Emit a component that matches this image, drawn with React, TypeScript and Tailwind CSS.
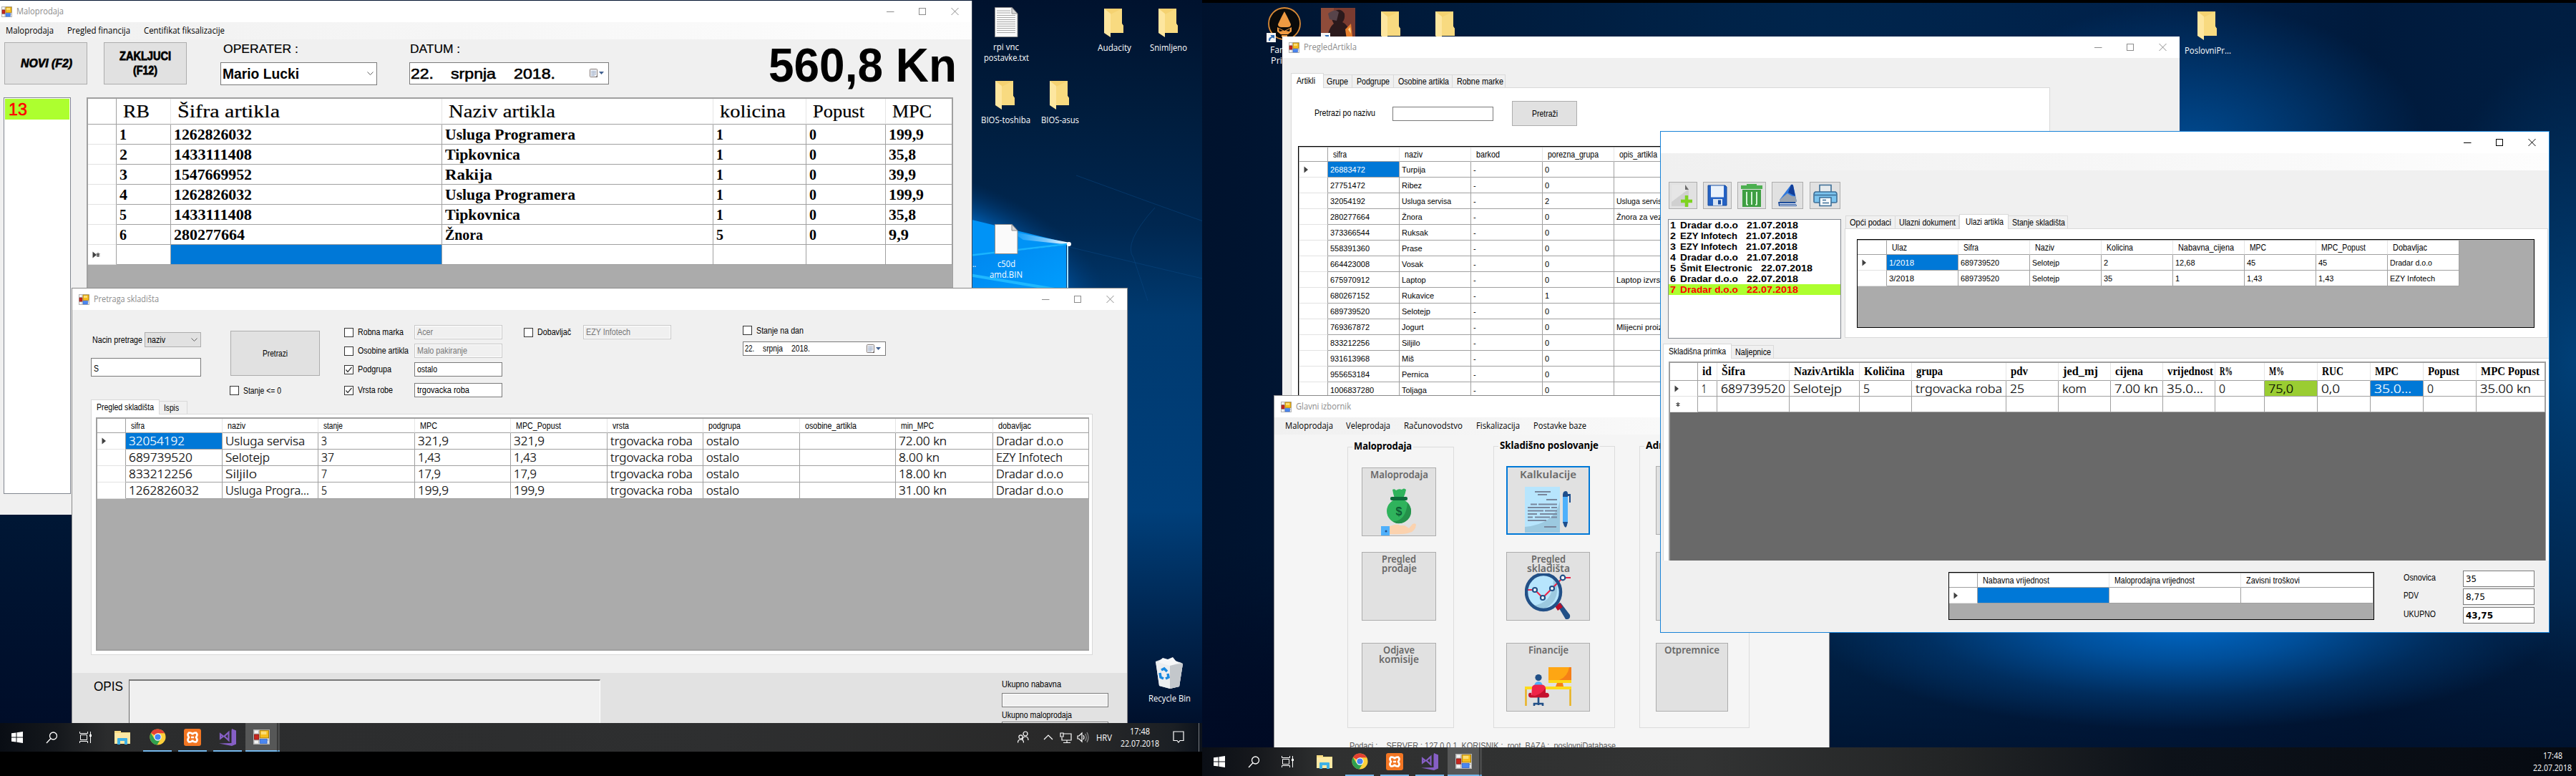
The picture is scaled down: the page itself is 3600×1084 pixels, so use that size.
import React, { useLayoutEffect, useRef } from "react";

const SANS = "font-['Liberation_Sans',Arial,sans-serif]";
const UI = "font-['Open_Sans',sans-serif]";
const SERIF = "font-['Liberation_Serif',serif]";
const NOTO = "font-['Noto_Sans',sans-serif]";

/* Single line of text squeezed or stretched horizontally to a given width. */
function Fit({ w, children, className = "" }: { w?: number; children: React.ReactNode; className?: string }) {
  const ref = useRef<HTMLSpanElement>(null);
  useLayoutEffect(() => {
    const el = ref.current;
    if (!el || !w) return;
    el.style.transform = "none";
    const natural = el.getBoundingClientRect().width;
    if (natural > 0) el.style.transform = `scaleX(${w / natural})`;
  });
  return (
    <span className={`block shrink-0 ${className}`} style={w ? { width: w } : undefined}>
      <span ref={ref} className="inline-block origin-left whitespace-pre">
        {children}
      </span>
    </span>
  );
}

/* "text|width" shorthand */
function Txt({ v, className = "" }: { v: string; className?: string }) {
  const [t, w] = v.split("|");
  return (
    <Fit w={w ? Number(w) : undefined} className={className}>
      {t}
    </Fit>
  );
}

function FormIcon({ className = "h-[15px] w-[15px]" }: { className?: string }) {
  return (
    <svg viewBox="0 0 15 15" className={`shrink-0 ${className}`} preserveAspectRatio="none">
      <rect x="0.5" y="0.5" width="14" height="14" fill="#f4f4f4" stroke="#b4b4b4" />
      <path d="M5 1v13M1 4.5h4M1 10.500h13" stroke="#b8b8b8" strokeWidth="1" />
      <rect x="1" y="5" width="4" height="5" fill="#c8261e" stroke="#8e1a14" strokeWidth="0.6" />
      <rect x="6" y="1" width="8" height="7.500" fill="#f6bd1d" stroke="#a87a08" strokeWidth="0.7" />
      <rect x="7" y="2" width="5" height="3" fill="#fbdc74" />
      <rect x="6" y="9.500" width="6.500" height="4.500" fill="#4a86f0" stroke="#2d5fc0" strokeWidth="0.5" />
    </svg>
  );
}

function TitleBar({ title, dark = false }: { title?: string; dark?: boolean }) {
  const c = dark ? "#000000" : "#8c8c8c";
  return (
    <div className="flex h-[30px] shrink-0 items-center bg-white">
      {title && <FormIcon />}
      {title && <Txt v={title} className={`${UI} ml-[6px] text-[12.5px] leading-[20px] text-[#8c8c8c]`} />}
      <svg width="101" height="12" viewBox="0 0 101 12" className="mr-[18px] ml-auto">
        <path d="M0 6.500H10.500" stroke={c} />
        <rect x="45.500" y="1.500" width="9" height="9" fill="none" stroke={c} />
        <path d="M90.500 1L100.500 11M100.500 1L90.500 11" stroke={c} fill="none" />
      </svg>
    </div>
  );
}

type GridProps = {
  widths: number[];
  heads: string[];
  rows: string[][];
  headClass: string;
  cellClass: string;
  headPad: string;
  cellPad: string;
  headH: string;
  rowH: string;
  selected?: [number, number];
  green?: [number, number];
  marks?: string[];
  className: string;
};

function Marker({ kind }: { kind?: string }) {
  if (!kind) return null;
  return (
    <svg width="14" height="10" viewBox="0 0 14 10" className="ml-[6px]">
      {kind.includes(">") && <path d="M0.500 0.500L6 5L0.500 9.500Z" fill="#404040" />}
      {kind.includes("*") && (
        <path
          transform={kind.includes(">") ? "translate(4 0)" : "translate(1 0)"}
          d="M4 2V8M1.500 3.500L6.500 6.500M6.500 3.500L1.500 6.500"
          stroke="#404040"
          strokeWidth="1.300"
        />
      )}
    </svg>
  );
}

function DataGrid(p: GridProps) {
  return (
    <div className={`shrink-0 overflow-hidden ${p.className}`}>
      <div className={`flex ${p.headH}`}>
        {p.widths.map((w, i) => (
          <div
            key={i}
            className={`flex shrink-0 items-center overflow-hidden border-r border-b border-b-[#a0a0a0] bg-white ${
              i === 0 || i === p.widths.length - 1 ? "border-r-[#a0a0a0]" : "border-r-[#e5e5e5]"
            } ${i ? p.headPad : ""}`}
            style={{ width: w }}
          >
            {i > 0 && p.heads[i - 1] && <Txt v={p.heads[i - 1]} className={p.headClass} />}
          </div>
        ))}
      </div>
      {p.rows.map((r, ri) => (
        <div key={ri} className={`flex ${p.rowH}`}>
          {p.widths.map((w, i) => {
            const sel = p.selected && p.selected[0] === ri && p.selected[1] === i - 1;
            const grn = p.green && p.green[0] === ri && p.green[1] === i - 1;
            return (
              <div
                key={i}
                className={`flex shrink-0 items-center overflow-hidden border-r border-b border-r-[#a0a0a0] ${
                  i === 0 ? "border-b-[#e2e2e2]" : `border-b-[#a0a0a0] ${p.cellPad}`
                } ${sel ? "bg-[#0078d7] text-white" : grn ? "bg-[#9acd32] text-black" : "bg-white text-black"}`}
                style={{ width: w }}
              >
                {i === 0 ? <Marker kind={p.marks?.[ri]} /> : r[i - 1] ? <Txt v={r[i - 1]} className={p.cellClass} /> : null}
              </div>
            );
          })}
        </div>
      ))}
    </div>
  );
}

function Check({ on = false }: { on?: boolean }) {
  return (
    <svg width="13" height="13" viewBox="0 0 13 13" className="shrink-0">
      <rect x="0.500" y="0.500" width="12" height="12" fill="#fff" stroke="#333" />
      {on && <path d="M2.500 6.500L5 9.500L10.500 3" fill="none" stroke="#333" strokeWidth="1.200" />}
    </svg>
  );
}

function CalendarDrop() {
  return (
    <svg width="21" height="13" viewBox="0 0 21 13" className="shrink-0">
      <rect x="0.500" y="0.500" width="10" height="11" rx="0.800" fill="#f3f5f9" stroke="#857b78" />
      <path d="M2 3.500H9M2 5.500H9M2 7.500H9M2 9.500H7M3.500 2.500V10M5.500 2.500V10M7.500 2.500V9" stroke="#a9b7cd" strokeWidth="0.800" />
      <path d="M8 12L11 9V12Z" fill="#6b6462" />
      <path d="M13 4H20L16.500 8Z" fill="#3f5f8f" />
    </svg>
  );
}

function Chevron() {
  return (
    <svg width="9" height="6" viewBox="0 0 9 6">
      <path d="M0.500 0.500L4.500 4.500L8.500 0.500" fill="none" stroke="#606060" />
    </svg>
  );
}

function Tabs({ items, className = "" }: { items: { t: string; w: number; active?: boolean; pad: number }[]; className?: string }) {
  return (
    <div className={`flex h-[20px] shrink-0 items-end ${className}`}>
      {items.map((it) => (
        <div
          key={it.t}
          className={`flex shrink-0 items-center border border-b-0 border-[#d9d9d9] ${
            it.active ? "z-10 -mb-px h-[21px] bg-white pb-px" : "-ml-px h-[18px] bg-[#f0f0f0] pt-px"
          }`}
          style={{ width: it.w, paddingLeft: it.pad }}
        >
          <Txt v={it.t} className={`${SANS} text-[12px] leading-[14px]`} />
        </div>
      ))}
    </div>
  );
}

function Box({ v, className = "", kind = "on" }: { v?: string; className?: string; kind?: "on" | "off" | "readonly" }) {
  const look =
    kind === "off"
      ? "border-[#c8c8c8] bg-[#f0f0f0] text-[#777] shadow-[inset_0_0_0_1px_white]"
      : kind === "readonly"
        ? "border-[#7a7a7a] bg-[#f0f0f0] shadow-[inset_0_0_0_1px_white]"
        : "border-[#7a7a7a] bg-white";
  return (
    <div className={`${SANS} flex items-center overflow-hidden border pl-[3px] text-[12px] leading-[14px] ${look} ${className}`}>
      {v && <Txt v={v} />}
    </div>
  );
}

function CheckRow({ on, label, box, off, className = "" }: { on?: boolean; label: string; box?: string; off?: boolean; className?: string }) {
  return (
    <div className={`flex items-center ${className}`}>
      <Check on={on} />
      <Txt v={label} className={`${SANS} ml-[6px] text-[12px] leading-[14px]`} />
      {box && <Box v={box} kind={off ? "off" : "on"} className="ml-auto h-[20px] w-[123px]" />}
    </div>
  );
}

/* ---------- Maloprodaja ---------- */

const UP = "Usluga Programera|182";
const receipt = [
  ["1|10", "1262826032|109", UP, "1|10", "0|10", "199,9|49"],
  ["2|11", "1433111408|109", "Tipkovnica|105", "1|10", "0|10", "35,8|38"],
  ["3|11", "1547669952|109", "Rakija|66", "1|10", "0|10", "39,9|38"],
  ["4|11", "1262826032|109", UP, "1|10", "0|10", "199,9|49"],
  ["5|10", "1433111408|109", "Tipkovnica|105", "1|10", "0|10", "35,8|38"],
  ["6|10", "280277664|99", "Žnora|53", "5|10", "0|10", "9,9|28"],
  ["", "", "", "", "", ""],
];

function Maloprodaja() {
  return (
    <div className="absolute top-px left-0 flex h-[718px] w-[1359px] flex-col overflow-hidden border-r border-[#3a4658] bg-[#f0f0f0] pl-[2px]">
      <div className="-ml-[2px] bg-white pl-[2px]">
        <TitleBar title="Maloprodaja|66" />
      </div>
      <div className={`${UI} -ml-[2px] flex h-[24px] shrink-0 items-center bg-linear-to-r from-[#f0f0f0] to-[#fdfdfd] text-[12.5px] leading-[16px]`}>
        <Txt v="Maloprodaja|67" className="ml-[8px]" />
        <Txt v="Pregled financija|88" className="ml-[19px]" />
        <Txt v="Centifikat fiksalizacije|113" className="ml-[19px]" />
      </div>
      <div className="flex h-[81px] shrink-0 items-start pt-[4px] pl-[4px]">
        <div className="flex h-[59px] w-[116px] items-center border border-[#adadad] bg-[#e1e1e1]">
          <Txt v="NOVI (F2)|72" className={`${SANS} ml-[22px] text-[17px] font-black italic [-webkit-text-stroke:0.7px_black]`} />
        </div>
        <div className={`${SANS} ml-[23px] flex h-[59px] w-[116px] flex-col items-center justify-center border border-[#adadad] bg-[#e1e1e1] text-[17px] leading-[20px] font-black [-webkit-text-stroke:0.8px_black]`}>
          <Txt v="ZAKLJUCI|72" />
          <Txt v="(F12)|34" />
        </div>
        <div className="ml-[47px] w-[219px]">
          <Txt v="OPERATER :|105" className={`${SANS} ml-[4px] text-[17px] leading-[20px] [-webkit-text-stroke:0.2px_black]`} />
          <div className="mt-[8px] flex h-[32px] items-center border border-[#7a7a7a] bg-white pr-[4px] pl-[2px]">
            <Txt v="Mario Lucki|107" className={`${SANS} text-[20px] leading-[24px] font-bold`} />
            <div className="ml-auto">
              <Chevron />
            </div>
          </div>
        </div>
        <div className="ml-[45px] w-[279px]">
          <Txt v="DATUM :|70" className={`${SANS} ml-px text-[17px] leading-[20px] [-webkit-text-stroke:0.2px_black]`} />
          <div className={`${SANS} mt-[8px] flex h-[31px] items-center border border-[#7a7a7a] bg-white pr-[5px] text-[20px] leading-[24px] [-webkit-text-stroke:0.6px_black]`}>
            <Txt v="22.|32" className="ml-px" />
            <Txt v="srpnja|63" className="ml-[24px]" />
            <Txt v="2018.|58" className="ml-[25px]" />
            <div className="ml-auto">
              <CalendarDrop />
            </div>
          </div>
        </div>
        <Txt v="560,8 Kn|263" className={`${SANS} mr-[21px] ml-auto text-[66px] leading-[64px] font-bold`} />
      </div>
      <div className="flex items-start pl-[3px]">
        <div className="h-[554px] w-[94px] shrink-0 border border-[#828790] bg-white p-px">
          <div className="flex h-[29px] items-center bg-[#adff2f] pl-[5px]">
            <Txt v="13|26" className={`${SANS} text-[24px] leading-[26px] text-[#ff0000] [-webkit-text-stroke:0.6px_#ff0000]`} />
          </div>
        </div>
        <DataGrid
          className="ml-[22px] h-[500px] w-[1211px] border-2 border-r border-[#a0a0a0] bg-[#ababab]"
          widths={[40, 76, 379, 379, 130, 111, 93]}
          heads={["RB|37", "Šifra artikla|143", "Naziv artikla|149", "kolicina|92", "Popust|72", "MPC|55"]}
          rows={receipt}
          marks={["", "", "", "", "", "", ">*"]}
          selected={[6, 1]}
          headH="h-[36px]"
          rowH="h-[28px]"
          headPad="pl-[9px]"
          cellPad="pl-[4px]"
          headClass={`${SERIF} text-[25px] leading-[30px] [-webkit-text-stroke:0.2px_black]`}
          cellClass={`${SERIF} text-[20.5px] leading-[24px] font-bold`}
        />
      </div>
    </div>
  );
}

/* ---------- Pretraga skladišta ---------- */

const stock = [
  ["32054192|78", "Usluga servisa|111", "3|8", "321,9|43", "321,9|43", "trgovacka roba|115", "ostalo|46", "", "72.00 kn|67", "Dradar d.o.o|94"],
  ["689739520|89", "Selotejp|62", "37|18", "1,43|32", "1,43|32", "trgovacka roba|115", "ostalo|46", "", "8.00 kn|57", "EZY Infotech|93"],
  ["833212256|89", "Siljilo|44", "7|8", "17,9|32", "17,9|32", "trgovacka roba|115", "ostalo|46", "", "18.00 kn|67", "Dradar d.o.o|94"],
  ["1262826032|98", "Usluga Progra...|117", "5|8", "199,9|43", "199,9|43", "trgovacka roba|115", "ostalo|46", "", "31.00 kn|67", "Dradar d.o.o|94"],
];

function PretragaSkladista() {
  return (
    <div className={`${SANS} absolute top-[402px] left-[100px] flex h-[640px] w-[1476px] flex-col overflow-hidden border border-[#8a8a8a] bg-[#f0f0f0] text-[12px] leading-[14px]`}>
      <div className="bg-white pl-[9px]">
        <TitleBar title="Pretraga skladišta|91" />
      </div>
      <div className="flex h-[125px] shrink-0 items-start">
        <div className="ml-[26px] w-[154px] pt-[31px]">
          <div className="flex h-[21px] items-center">
            <Txt v="Nacin pretrage|70" className="ml-[2px]" />
            <div className="ml-auto flex h-[21px] w-[79px] items-center border border-[#adadad] bg-[#e1e1e1] pr-[4px] pl-[3px]">
              <Txt v="naziv|25" />
              <div className="ml-auto">
                <Chevron />
              </div>
            </div>
          </div>
          <Box v="S|7" className="mt-[15px] h-[26px] pt-[3px]" />
        </div>
        <div className="ml-[41px] w-[125px] pt-[29px]">
          <div className="flex h-[63px] items-center justify-center border border-[#adadad] bg-[#e1e1e1]">
            <Txt v="Pretrazi|35" />
          </div>
          <CheckRow label="Stanje <= 0|53" className="mt-[14px] -ml-px h-[13px]" />
        </div>
        <div className="ml-[34px] w-[221px] pt-[21px]">
          <CheckRow label="Robna marka|64" box="Acer|22" off className="h-[20px]" />
          <CheckRow label="Osobine artikla|71" box="Malo pakiranje|70" off className="mt-[6px] h-[20px]" />
          <CheckRow on label="Podgrupa|47" box="ostalo|28" className="mt-[6px] h-[20px]" />
          <CheckRow on label="Vrsta robe|49" box="trgovacka roba|73" className="mt-[9px] h-[20px]" />
        </div>
        <div className="ml-[30px] w-[206px] pt-[21px]">
          <CheckRow label="Dobavljač|47" box="EZY Infotech|62" off className="h-[20px]" />
        </div>
        <div className="ml-[100px] w-[200px] pt-[22px]">
          <CheckRow label="Stanje na dan|66" className="h-[13px]" />
          <div className="mt-[9px] flex h-[20px] items-center border border-[#7a7a7a] bg-white pr-[5px] pl-[2px]">
            <Txt v="22.|13" />
            <Txt v="srpnja|28" className="ml-[12px]" />
            <Txt v="2018.|26" className="ml-[12px]" />
            <div className="ml-auto">
              <CalendarDrop />
            </div>
          </div>
        </div>
      </div>
      <Tabs
        className="ml-[26px]"
        items={[
          { t: "Pregled skladišta|80", w: 96, active: true, pad: 7 },
          { t: "Ispis|21", w: 40, pad: 6 },
        ]}
      />
      <div className="ml-[26px] h-[337px] w-[1400px] shrink-0 border border-[#d9d9d9] bg-white pt-[4px] pl-[6px]">
        <DataGrid
          className="h-[326px] w-[1388px] border-2 border-r-0 border-[#a0a0a0] bg-[#ababab]"
          widths={[40, 135, 134, 135, 134, 135, 134, 135, 134, 136, 134]}
          heads={["sifra|19", "naziv|25", "stanje|27", "MPC|24", "MPC_Popust|63", "vrsta|23", "podgrupa|45", "osobine_artikla|72", "min_MPC|46", "dobavljac|46"]}
          rows={stock}
          marks={[">"]}
          selected={[0, 0]}
          headH="h-[20px]"
          rowH="h-[23px]"
          headPad="pl-[7px]"
          cellPad="pl-[4px]"
          headClass={`${SANS} text-[12px] leading-[14px]`}
          cellClass={`${NOTO} text-[17px] leading-[20px] font-light [-webkit-text-stroke:0.2px]`}
        />
      </div>
      <div className="mt-[25px] flex h-[110px] shrink-0 items-start bg-[#e2e2e2]">
        <Txt v="OPIS|41" className="mt-[8px] ml-[30px] text-[18px] leading-[22px]" />
        <div className="mt-[9px] ml-[8px] h-[120px] w-[659px] border-t-2 border-r border-l border-t-[#787878] border-r-white border-l-[#696969] bg-[#f0f0f0]" />
        <div className="ml-[561px] w-[149px] pt-[9px]">
          <Txt v="Ukupno nabavna|83" />
          <Box kind="readonly" className="mt-[5px] h-[20px]" />
          <Txt v="Ukupno maloprodaja|98" className="mt-[4px]" />
          <Box kind="readonly" className="mt-[2px] h-[20px]" />
        </div>
      </div>
    </div>
  );
}

/* ---------- PregledArtikla ---------- */

const articles = (
  [
    ["26883472", "Turpija", "0", ""],
    ["27751472", "Ribez", "0", ""],
    ["32054192", "Usluga servisa|69", "2", "Usluga servisa|69"],
    ["280277664", "Žnora", "0", "Žnora za vezanje"],
    ["373366544", "Ruksak", "0", ""],
    ["558391360", "Prase", "0", ""],
    ["664423008", "Vosak", "0", ""],
    ["675970912", "Laptop", "0", "Laptop izvrsni|70"],
    ["680267152", "Rukavice", "1", ""],
    ["689739520", "Selotejp", "0", ""],
    ["769367872", "Jogurt", "0", "Mlijecni proizvod|82"],
    ["833212256", "Siljilo", "0", ""],
    ["931613968", "Miš", "0", ""],
    ["955653184", "Pernica", "0", ""],
    ["1006837280", "Toljaga", "0", ""],
  ] as string[][]
).map(([a, b, c, d]) => [a, b, "-", c, d]);

function PregledArtikla() {
  return (
    <div className={`${SANS} absolute top-[51px] left-[112px] flex h-[560px] w-[1254px] flex-col overflow-hidden bg-[#f0f0f0] text-[12px] leading-[14px]`}>
      <div className="bg-white pl-[9px]">
        <TitleBar title="PregledArtikla|74" />
      </div>
      <Tabs
        className="mt-[21px] ml-[12px]"
        items={[
          { t: "Artikli|26", w: 46, active: true, pad: 7 },
          { t: "Grupe|30", w: 41, pad: 4 },
          { t: "Podgrupe|46", w: 59, pad: 6 },
          { t: "Osobine artikla|71", w: 83, pad: 6 },
          { t: "Robne marke|65", w: 75, pad: 6 },
        ]}
      />
      <div className="ml-[12px] h-[460px] w-[1061px] border border-[#d9d9d9] bg-white">
        <div className="flex h-[81px] items-start pt-[18px] pl-[32px]">
          <Txt v="Pretrazi po nazivu|85" className="mt-[10px]" />
          <Box className="mt-[8px] ml-[24px] h-[20px] w-[141px]" />
          <div className="ml-[26px] flex h-[35px] w-[91px] items-center justify-center border border-[#adadad] bg-[#e1e1e1]">
            <Txt v="Pretraži|36" />
          </div>
        </div>
        <DataGrid
          className="ml-[9px] h-[370px] w-[1000px] border border-black bg-[#ababab] pt-px pl-px"
          widths={[40, 100, 100, 100, 100, 100]}
          heads={["sifra|19", "naziv|25", "barkod|33", "porezna_grupa|71", "opis_artikla|53"]}
          rows={articles}
          marks={[">"]}
          selected={[0, 0]}
          headH="h-[20px]"
          rowH="h-[22px]"
          headPad="pl-[7px]"
          cellPad="pl-[3px]"
          headClass={`${SANS} text-[12px] leading-[14px]`}
          cellClass={`${SANS} text-[11px] leading-[14px]`}
        />
      </div>
    </div>
  );
}

/* ---------- Glavni izbornik ---------- */

function MoneyBag() {
  return (
    <svg width="52" height="66" viewBox="0 0 52 66" preserveAspectRatio="none">
      <path d="M17 2Q20 0 22 3Q26 0 30 2Q33 -1 36 2Q35 8 32 14H20Q18 8 17 2Z" fill="#2fb35c" />
      <ellipse cx="26" cy="32" rx="17" ry="17" fill="#2fb35c" />
      <path d="M43 32A17 17 0 0 1 17 46.500Q36 46 38 20Q43 26 43 32Z" fill="#24914a" />
      <rect x="14" y="12" width="24" height="5" rx="2" fill="#0d6b3a" />
      <text x="26" y="37.500" textAnchor="middle" fontSize="16" fill="#0d5c34" fontFamily="Liberation Sans" fontWeight="bold">
        $
      </text>
      <rect x="1" y="53" width="12" height="13" fill="#4fb0fb" />
      <path d="M13 53L20 51Q26 50 27 52H34L40 56L45 50Q49 48 50 51Q49 60 41 62Q34 65 13 64Z" fill="#fbd2ae" />
      <circle cx="8" cy="60" r="1.500" fill="#1f4e8c" />
    </svg>
  );
}

function DocPen() {
  return (
    <svg width="65" height="64" viewBox="0 0 65 64" preserveAspectRatio="none">
      <rect width="49" height="64" fill="#b7e5fd" />
      <path d="M49 20Q42 52 0 56V64H49Z" fill="#9cc9e0" />
      <path
        d="M14 7H36M18 11H31M30 18H45M8 24.500H17M19 24.500H45M4 29H35M37 29H45M4 33.500H26M28 33.500H45M4 38H17M21 38H45M4 42.500H11M14 42.500H35M37 42.500H45M4 47H30M27 56H44"
        stroke="#78869c"
        strokeWidth="2"
      />
      <rect x="53" y="10" width="7" height="41" fill="#4fb0fb" />
      <path d="M53 12Q53 6 57 6Q60 6 60 10H64V22H62V13H60V14H53ZM53 49H60L58.500 55L57 57L55 55Z" fill="#1f4e8c" />
    </svg>
  );
}

function Magnifier() {
  return (
    <svg width="65" height="64" viewBox="0 0 65 64" preserveAspectRatio="none">
      <path d="M45 44L50 41L63 58Q64 63 60 64H57Z" fill="#225087" />
      <path d="M42 46L49 41L53 47L46 52Z" fill="#b80f2a" />
      <ellipse cx="26" cy="26" rx="24" ry="25" fill="#b7e5fd" />
      <path d="M44 14Q50 40 24 51Q16 51 10 45Q40 42 40 9Z" fill="#9cc9e0" />
      <path d="M4 23H14L25 34L38 21L53 6H64" fill="none" stroke="#ef2348" strokeWidth="2.200" />
      <ellipse cx="26" cy="26" rx="24" ry="25" fill="none" stroke="#225087" strokeWidth="4.500" />
      <g fill="#fff" stroke="#225087" strokeWidth="2.200">
        <circle cx="14" cy="23" r="3" />
        <circle cx="25" cy="34" r="3" />
        <circle cx="38" cy="21" r="3" />
        <circle cx="53" cy="6" r="3.300" />
      </g>
    </svg>
  );
}

function Desk() {
  return (
    <svg width="65" height="56" viewBox="0 0 65 56" preserveAspectRatio="none">
      <rect x="33" y="1" width="32" height="18" fill="#fea613" />
      <path d="M65 1V19H48Q60 14 62 1Z" fill="#f57f17" />
      <rect x="33" y="19" width="32" height="4" fill="#fdd914" />
      <path d="M45 23H53L54 28H43Z" fill="#f57f17" />
      <rect x="0" y="28" width="65" height="4" fill="#fedb1c" />
      <path d="M1.500 32V55M63.500 32V55" stroke="#e9b11c" strokeWidth="2.400" />
      <circle cx="19" cy="15.500" r="4.600" fill="#225087" />
      <path d="M13 27Q14 21 19 21Q24 21 25 27Z" fill="#4fb0fb" />
      <path d="M10 29Q11 25.500 15 25.500H24Q29 26 29 31V43H9Z" fill="#ef2348" />
      <path d="M5 40Q5 36 9 37V40L14 41Q24 38 29 30V37Q33 36 34 40Q34 43 31 43.500H8Q5 43 5 40Z" fill="#c4102e" />
      <path d="M19 43V54M12 52H26M13 51V55M25 51V55" stroke="#225087" strokeWidth="2.600" />
    </svg>
  );
}

function MenuButton({ lines, children, focus = false, className = "" }: { lines: string[]; children?: React.ReactNode; focus?: boolean; className?: string }) {
  return (
    <div
      className={`${NOTO} flex h-[96px] flex-col items-center bg-[#e1e1e1] text-[13.500px] leading-[13px] font-semibold text-[#696969] ${
        focus ? "border-2 border-[#0078d7] pt-[4px]" : "border border-[#adadad] pt-[3px]"
      } ${className}`}
    >
      {lines.map((l) => (
        <Txt key={l} v={l} />
      ))}
      {children}
    </div>
  );
}

function Group({ title, className = "", children }: { title: string; className?: string; children: React.ReactNode }) {
  return (
    <div className={`shrink-0 border border-[#dcdcdc] ${className}`}>
      <div className={`${NOTO} -mt-[11px] ml-[6px] h-[20px] w-fit bg-[#f5f5f5] px-[2px] text-[14px] leading-[18px] font-bold`}>
        <Txt v={title} />
      </div>
      {children}
    </div>
  );
}

function GlavniIzbornik() {
  return (
    <div className="absolute top-[552px] left-[100px] flex h-[560px] w-[777px] flex-col overflow-hidden border border-[#8a8a8a] bg-[#f5f5f5]">
      <div className="bg-white pl-[9px]">
        <TitleBar title="Glavni izbornik|77" />
      </div>
      <div className={`${UI} flex h-[24px] shrink-0 items-center bg-linear-to-r from-[#f0f0f0] to-[#fdfdfd] text-[12.5px] leading-[16px]`}>
        <Txt v="Maloprodaja|67" className="ml-[15px]" />
        <Txt v="Veleprodaja|62" className="ml-[18px]" />
        <Txt v="Računovodstvo|82" className="ml-[19px]" />
        <Txt v="Fiskalizacija|61" className="ml-[19px]" />
        <Txt v="Postavke baze|74" className="ml-[19px]" />
      </div>
      <div className="flex shrink-0 items-end pt-[16px] pl-[102px]">
        <Group title="Maloprodaja|81" className="h-[393px] w-[149px]">
          <MenuButton lines={["Maloprodaja|81"]} className="mt-[19px] ml-[19px] w-[104px]">
            <div className="mt-[12px]">
              <MoneyBag />
            </div>
          </MenuButton>
          <MenuButton lines={["Pregled|48", "prodaje|49"]} className="mt-[22px] ml-[19px] w-[104px]" />
          <MenuButton lines={["Odjave|44", "komisije|56"]} className="mt-[31px] ml-[19px] w-[104px]" />
        </Group>
        <Group title="Skladišno poslovanje|138" className="ml-[55px] h-[394px] w-[170px]">
          <MenuButton focus lines={["Kalkulacije|79"]} className="mt-[18px] ml-[17px] w-[117px]">
            <div className="mt-[10px]">
              <DocPen />
            </div>
          </MenuButton>
          <MenuButton lines={["Pregled|48", "skladišta|60"]} className="mt-[24px] ml-[17px] w-[117px]">
            <Magnifier />
          </MenuButton>
          <MenuButton lines={["Financije|56"]} className="mt-[31px] ml-[17px] w-[117px]">
            <div className="mt-[16px]">
              <Desk />
            </div>
          </MenuButton>
        </Group>
        <Group title="Administracija|100" className="ml-[34px] h-[394px] w-[154px]">
          <MenuButton lines={[]} className="mt-[18px] ml-[22px] w-[101px]" />
          <MenuButton lines={[]} className="mt-[24px] ml-[22px] w-[101px]" />
          <MenuButton lines={["Otpremnice|77"]} className="mt-[31px] ml-[22px] w-[101px]" />
        </Group>
      </div>
      <Txt
        v="Podaci :    SERVER : 127.0.0.1  KORISNIK :  root  BAZA :  poslovniDatabase|372"
        className={`${SANS} mt-[15px] ml-[105px] text-[13px] leading-[20px] text-[#5c5c5c]`}
      />
    </div>
  );
}

/* ---------- Kalkulacije window ---------- */

function ToolButton({ className, children }: { className: string; children: React.ReactNode }) {
  return <div className={`flex h-[38px] items-center justify-center border border-[#adadad] bg-[#e1e1e1] ${className}`}>{children}</div>;
}

function Toolbar() {
  return (
    <div className="ml-px flex items-center">
      <ToolButton className="w-[40px]">
        <svg width="34" height="34" viewBox="0 0 34 34">
          <path d="M1 2H20L25 8V32H1Z" fill="#d0d0d0" />
          <path d="M1 2H20L25 8L1 26Z" fill="#e6e6e6" />
          <path d="M20 2L25 9H20Z" fill="#6a6a6a" />
          <path d="M22 17V33M14 25H30" stroke="#7ed321" strokeWidth="4.500" />
        </svg>
      </ToolButton>
      <ToolButton className="ml-[8px] w-[40px]">
        <svg width="28" height="30" viewBox="0 0 28 30">
          <path d="M1 1H25L27 3V29H1Z" fill="#2462c4" stroke="#174a9c" />
          <rect x="5" y="1.500" width="18" height="16" fill="#eaf2fb" />
          <rect x="8" y="20" width="13" height="9" fill="#d8e4f2" />
          <rect x="15" y="21.500" width="4" height="6" fill="#1a4ea2" />
        </svg>
      </ToolButton>
      <ToolButton className="ml-[8px] w-[40px]">
        <svg width="32" height="32" viewBox="0 0 32 32">
          <path d="M9 0H23V2H31V7H1V2H9Z" fill="#4caf50" />
          <path d="M3 8H29V32H3Z" fill="#3f9f42" />
          <path d="M9 11V28Q9 29 11 29M16 11V29M23 11V28Q23 29 21 29" stroke="#d7f3d8" strokeWidth="2" fill="none" />
        </svg>
      </ToolButton>
      <ToolButton className="ml-[8px] w-[44px]">
        <svg width="28" height="32" viewBox="0 0 28 32">
          <path d="M3 22L19 1Q21 0 22 2L27 25L3 26Z" fill="#2f78dd" />
          <path d="M19 1Q21 0 22 2L25 17L15 12Z" fill="#123f9a" />
          <path d="M3 22L14 13Q20 18 25 17L27 25L3 26Z" fill="#9aa4b0" />
          <path d="M1 25L25 25L27 31H2Z" fill="#1d4c9a" />
          <path d="M3 27.500H26M3 29.500H26" stroke="#f2f6fb" strokeWidth="1" />
        </svg>
      </ToolButton>
      <ToolButton className="ml-[9px] w-[43px]">
        <svg width="34" height="32" viewBox="0 0 34 32" fill="none" stroke="#3c6e96" strokeWidth="1.600">
          <path d="M9 12V1.500H25V12" fill="#e6ebee" />
          <path d="M3 11H31Q33 12 33 14V25Q33 26 31 26H3Q1 26 1 25V14Q1 12 3 11Z" fill="#7cc4ee" />
          <path d="M2 15.500H32" />
          <path d="M9 19H25V30.500H9Z" fill="#f6fafc" />
          <path d="M13 22.500H18M13 26.500H22" />
        </svg>
      </ToolButton>
    </div>
  );
}

const suppliers: [string, string, string][] = [
  ["1", "Dradar d.o.o|81", "21.07.2018|72"],
  ["2", "EZY Infotech|80", "21.07.2018|72"],
  ["3", "EZY Infotech|80", "21.07.2018|72"],
  ["4", "Dradar d.o.o|81", "21.07.2018|72"],
  ["5", "Šmit Electronic|101", "22.07.2018|72"],
  ["6", "Dradar d.o.o|81", "22.07.2018|72"],
  ["7", "Dradar d.o.o|81", "22.07.2018|72"],
];

function TotalRow({ label, v, bold = false, className = "" }: { label: string; v: string; bold?: boolean; className?: string }) {
  return (
    <div className={`flex h-[23px] items-center ${className}`}>
      <div className="w-[83px] pb-[4px]">
        <Txt v={label} />
      </div>
      <div className={`${bold ? "font-bold" : ""} flex h-[23px] w-[100px] items-center border border-[#7a7a7a] bg-white pl-[3px] font-['DejaVu_Sans',sans-serif] text-[12px]`}>
        <Txt v={v} />
      </div>
    </div>
  );
}

function Kalkulacije() {
  return (
    <div className={`${SANS} absolute top-[183px] left-[640px] flex h-[701px] w-[1243px] flex-col overflow-hidden border border-[#1883d7] bg-[#f0f0f0] text-[12px] leading-[14px]`}>
      <TitleBar dark />
      <div className="h-[24px] shrink-0 bg-linear-to-r from-[#f0f0f0] to-[#fdfdfd]" />
      <div className="flex h-[242px] shrink-0 items-start">
        <div className="ml-[10px] w-[242px] shrink-0 pt-[16px]">
          <Toolbar />
          <div className="mt-[14px] h-[167px] border border-[#828790] bg-white">
            {suppliers.map(([n, name, date], i) => (
              <div key={n} className={`flex h-[15px] items-center text-[13px] leading-[15px] font-bold ${i === 6 ? "bg-[#adff2f] text-[#ff0000]" : "text-black"}`}>
                <Fit w={8} className="ml-[2px]">
                  {n}
                </Fit>
                <Txt v={name} className="ml-[6px]" />
                <Txt v={date} className="ml-[12px]" />
              </div>
            ))}
          </div>
        </div>
        <div className="ml-[5px] pt-[61px]">
          <Tabs
            className="pl-[2px]"
            items={[
              { t: "Opći podaci|58", w: 70, pad: 5 },
              { t: "Ulazni dokument|79", w: 90, pad: 5 },
              { t: "Ulazi artikla|53", w: 69, active: true, pad: 8 },
              { t: "Stanje skladišta|74", w: 84, pad: 5 },
            ]}
          />
          <div className="h-[153px] w-[983px] border border-[#d9d9d9] bg-white pt-[14px] pl-[16px]">
            <DataGrid
              className="h-[124px] w-[947px] border border-black bg-[#ababab] pt-px"
              widths={[41, 100, 100, 100, 100, 100, 100, 100, 100]}
              heads={["Ulaz|21", "Sifra|21", "Naziv|27", "Kolicina|37", "Nabavna_cijena|78", "MPC|23", "MPC_Popust|62", "Dobavljac|48"]}
              rows={[
                ["1/2018|35", "689739520|54", "Selotejp|38", "2", "12,68", "45", "45", "Dradar d.o.o|59"],
                ["3/2018|35", "689739520|54", "Selotejp|38", "35", "1", "1,43", "1,43", "EZY Infotech|63"],
              ]}
              marks={[">"]}
              selected={[0, 0]}
              headH="h-[20px]"
              rowH="h-[22px]"
              headPad="pl-[7px]"
              cellPad="pl-[3px]"
              headClass="text-[12px] leading-[14px]"
              cellClass="text-[11px] leading-[14px]"
            />
          </div>
        </div>
      </div>
      <Tabs
        className="ml-[3px]"
        items={[
          { t: "Skladišna primka|80", w: 96, active: true, pad: 7 },
          { t: "Naljepnice|50", w: 60, pad: 5 },
        ]}
      />
      <div className="ml-[3px] h-[283px] shrink-0 border-t border-l border-[#d9d9d9] bg-white pt-[4px] pl-[7px]">
        <DataGrid
          className="h-[278px] w-[1226px] border-2 border-r border-b-0 border-[#a0a0a0] bg-[#696969]"
          widths={[39, 27, 101, 98, 73, 132, 73, 73, 73, 73, 69, 74, 74, 74, 74, 96]}
          heads={[
            "id|13",
            "Šifra|33",
            "NazivArtikla|84",
            "Količina|57",
            "grupa|37",
            "pdv|24",
            "jed_mj|49",
            "cijena|39",
            "vrijednost|64",
            "R%|18",
            "M%|21",
            "RUC|30",
            "MPC|33",
            "Popust|44",
            "MPC Popust|82",
          ]}
          rows={[
            ["1|7", "689739520|90", "Selotejp|68", "5|9", "trgovacka roba|121", "25|20", "kom|34", "7.00 kn|61", "35.0...|51", "0|9", "75,0|35", "0,0|26", "35.0...|52", "0|9", "35.00 kn|71"],
            ["", "", "", "", "", "", "", "", "", "", "", "", "", "", ""],
          ]}
          marks={[">", "*"]}
          selected={[0, 12]}
          green={[0, 10]}
          headH="h-[25px]"
          rowH="h-[22px]"
          headPad="pl-[6px]"
          cellPad="pl-[5px]"
          headClass={`${SERIF} text-[16.500px] leading-[20px] font-bold`}
          cellClass={`${NOTO} text-[17px] leading-[20px] font-light [-webkit-text-stroke:0.2px]`}
        />
      </div>
      <div className="flex items-start">
        <DataGrid
          className="mt-[16px] ml-[402px] h-[67px] w-[595px] border border-black bg-[#ababab] pt-px"
          widths={[40, 184, 184, 185]}
          heads={["Nabavna vrijednost|93", "Maloprodajna vrijednost|112", "Zavisni troškovi|75"]}
          rows={[["", "", ""]]}
          marks={[">"]}
          selected={[0, 0]}
          headH="h-[20px]"
          rowH="h-[22px]"
          headPad="pl-[7px]"
          cellPad="pl-[3px]"
          headClass="text-[12px] leading-[14px]"
          cellClass="text-[11px] leading-[14px]"
        />
        <div className="ml-[41px] pt-[14px]">
          <TotalRow label="Osnovica|45" v="35|15" />
          <TotalRow label="PDV|21" v="8,75|27" className="mt-[2px]" />
          <TotalRow label="UKUPNO|45" v="43,75|38" bold className="mt-[3px]" />
        </div>
      </div>
    </div>
  );
}

/* ---------- Desktop ---------- */

function Folder() {
  return (
    <svg width="28" height="41" viewBox="0 0 28 41">
      <path d="M0 0H25V21L27 24V34H0Z" fill="#f5d271" />
      <path d="M9 8L25 0V21L27 24V34H9Z" fill="#f8da80" />
      <path d="M0 0L9 7V40L0 34Z" fill="#fde69f" />
    </svg>
  );
}

function Sheet({ lined = false }: { lined?: boolean }) {
  return (
    <svg width="33" height="42" viewBox="0 0 33 42">
      <path d="M0.500 0.500H24L32 9V41.500H0.500Z" fill="#fafafa" stroke="#8b8b8b" />
      <path d="M24 0.500V9H32Z" fill="#d8d8d8" stroke="#8b8b8b" />
      {lined && <path d="M3 5H22M3 8H22M3 11.500H29M3 14.500H29M3 17.500H29M3 20.500H29M3 23.500H29M3 26.500H29M3 29.500H29M3 32.500H29M3 35.500H29" stroke="#a9a9a9" />}
    </svg>
  );
}

function DeskItem({ className, labels, children }: { className: string; labels: string[]; children: React.ReactNode }) {
  return (
    <div className={`${UI} absolute flex w-[76px] flex-col items-center text-[12px] leading-[15px] text-white ${className}`}>
      {children}
      <div className="mt-[6px] flex flex-col items-center">
        {labels.map((l) => (
          <Txt key={l} v={l} />
        ))}
      </div>
    </div>
  );
}

function Shortcut() {
  return (
    <svg width="13" height="13" viewBox="0 0 13 13" className="absolute top-[36px] left-[-3px]">
      <rect width="13" height="13" fill="#f4f4f4" />
      <path d="M3 11Q2.500 6 7 5.500L5.500 3H11V8L9 6.500Q5 7 5 11Z" fill="#2f6cb5" />
    </svg>
  );
}

function TaskIcons() {
  return (
    <div className="flex h-[40px] items-stretch">
      <div className="flex w-[48px] items-center pl-[16px]">
        <svg width="16" height="16" viewBox="0 0 16 16" fill="#fff">
          <path d="M0 2.300L6.500 1.400V7.500H0ZM7.500 1.200L16 0V7.500H7.500ZM0 8.500H6.500V14.600L0 13.700ZM7.500 8.500H16V16L7.500 14.800Z" />
        </svg>
      </div>
      <div className="flex w-[48px] items-center pl-[16px]">
        <svg width="17" height="17" viewBox="0 0 17 17" fill="none" stroke="#fff" strokeWidth="1.300">
          <circle cx="10.500" cy="6" r="5" />
          <path d="M7 9.500L1 16" />
        </svg>
      </div>
      <div className="flex w-[50px] items-center pl-[15px]">
        <svg width="17" height="16" viewBox="0 0 17 16" fill="none" stroke="#fff">
          <path d="M0.500 0V2.500H11.500V0M0.500 16V13.500H11.500V16M1.500 4.500H10.500V11.500H1.500ZM15.500 0V16" />
          <rect x="14" y="4" width="3" height="3" fill="#fff" stroke="none" />
        </svg>
      </div>
      <div className="flex w-[54px] items-center pl-[14px]">
        <svg width="22" height="19" viewBox="0 0 22 19">
          <path d="M0 0H9V2H22V18H0Z" fill="#fbdd82" />
          <path d="M0 3H22V18H0Z" fill="#ffe9a4" />
          <path d="M4 19V11Q4 10 5 10H17Q18 10 18 11V19H14V14H8V19Z" fill="#3fb1e6" />
        </svg>
      </div>
      <div className="flex w-[40px] flex-col items-center border-b-2 border-[#76b9ed] pt-[8px]">
        <svg width="23" height="23" viewBox="0 0 24 24">
          <circle cx="12" cy="12" r="11.500" fill="#fdd03b" />
          <path d="M12 12L2 6.200A11.500 11.500 0 0 1 22 6.500H12Z" fill="#e34133" />
          <path d="M2 6.200A11.500 11.500 0 0 0 11 23.500L16.500 14.500L12 12L7 14.500Z" fill="#2fa04f" />
          <circle cx="12" cy="12" r="5.400" fill="#fff" />
          <circle cx="12" cy="12" r="4.300" fill="#4285f4" />
        </svg>
      </div>
      <div className="ml-[9px] flex w-[40px] flex-col items-center border-b-2 border-[#76b9ed] pt-[8px]">
        <svg width="24" height="24" viewBox="0 0 24 24">
          <rect width="24" height="24" rx="3" fill="#f37623" />
          <path
            d="M7 5.500Q12 5.500 12 8.500Q12 5.500 17 5.500Q20 8 17 12Q20 16 17 18.500Q12 18.500 12 15.500Q12 18.500 7 18.500Q4 16 7 12Q4 8 7 5.500ZM10 12H14"
            fill="none"
            stroke="#fff"
            strokeWidth="2.600"
          />
        </svg>
      </div>
      <div className="ml-[9px] flex w-[40px] flex-col items-center border-b-2 border-[#76b9ed] pt-[8px]">
        <svg width="24" height="24" viewBox="0 0 24 24">
          <path d="M18 0L24 2.500V21.500L18 24L0 20.500L17.500 20V3Z" fill="#865fc5" />
          <path d="M2 7.500V13.500L6 10.500ZM13.500 5V16L7.500 10.500Z" fill="none" stroke="#865fc5" strokeWidth="2.200" />
        </svg>
      </div>
      <div className="ml-[5px] flex w-[44px] justify-center border-b-2 border-[#76b9ed] bg-[#565757] pt-[9px]">
        <FormIcon className="h-[21px] w-[23px]" />
      </div>
      <div className="w-[4px] border-b-2 border-l border-b-[#5f9fd0] border-l-[#2c2c2c] bg-[#484949]" />
    </div>
  );
}

function LeftMonitor() {
  return (
    <div className="relative h-[1050px] w-[1680px] overflow-hidden bg-[linear-gradient(180deg,#00122e_0%,#001c3c_14%,#002750_30%,#003a70_42%,#003f7a_68%,#00234c_84%,#00102c_96%)]">
      <svg width="330" height="420" viewBox="0 0 330 420" className="absolute top-0 left-[1354px]">
        <defs>
          <radialGradient id="glow" gradientUnits="userSpaceOnUse" cx="0" cy="0" r="1" gradientTransform="translate(-30 385) rotate(22) scale(250 135)">
            <stop offset="0" stopColor="#00a2ff" />
            <stop offset="0.550" stopColor="#0074d6" stopOpacity="0.900" />
            <stop offset="1" stopColor="#003a78" stopOpacity="0" />
          </radialGradient>
          <linearGradient id="pane" x1="0" y1="0" x2="1" y2="1">
            <stop offset="0" stopColor="#0085ee" />
            <stop offset="1" stopColor="#00a0ff" />
          </linearGradient>
          <linearGradient id="beam" x1="0" y1="0" x2="1" y2="0">
            <stop offset="0" stopColor="#0098fb" />
            <stop offset="0.600" stopColor="#7ac6fb" />
            <stop offset="1" stopColor="#ffffff" />
          </linearGradient>
        </defs>
        <rect width="330" height="420" fill="url(#glow)" />
        <path d="M0 306L141 340L0 357Z" fill="#0093f6" />
        <path d="M58 323L141 339V342L76 335Z" fill="url(#beam)" />
        <path d="M0 358L136 342V420H0Z" fill="url(#pane)" />
        <path d="M0 357L137 341" stroke="#19b4ff" strokeWidth="2.500" />
        <path d="M138 341V420" stroke="#a8e2ff" strokeWidth="2" />
        <path d="M0 384L120 404" stroke="#20b8ff" strokeWidth="4" />
        <circle cx="140" cy="341" r="3" fill="#fff" />
        <path d="M140 345L330 390M150 245L260 285L330 310M260 290Q215 340 230 360L250 420" stroke="#0a4a86" fill="none" opacity="0.500" />
      </svg>
      <div className="absolute top-[719px] left-0 h-[291px] w-[100px] bg-linear-to-b from-[#001735] to-[#000d29]" />
      <Txt v="..|5" className={`${UI} absolute top-[361px] left-[1359px] text-[12px] leading-[15px] text-white`} />
      <DeskItem className="top-[10px] left-[1368px]" labels={["rpi vnc|36", "postavke.txt|63"]}>
        <Sheet lined />
      </DeskItem>
      <DeskItem className="top-[12px] left-[1519px]" labels={["Audacity|47"]}>
        <Folder />
      </DeskItem>
      <DeskItem className="top-[12px] left-[1595px]" labels={["Snimljeno|52"]}>
        <Folder />
      </DeskItem>
      <DeskItem className="top-[113px] left-[1367px]" labels={["BIOS-toshiba|69"]}>
        <Folder />
      </DeskItem>
      <DeskItem className="top-[113px] left-[1443px]" labels={["BIOS-asus|53"]}>
        <Folder />
      </DeskItem>
      <DeskItem className="top-[313px] left-[1368px]" labels={["c50d|25", "amd.BIN|46"]}>
        <Sheet />
      </DeskItem>
      <DeskItem className="top-[918px] left-[1596px]" labels={["Recycle Bin|59"]}>
        <svg width="38" height="44" viewBox="0 0 38 44">
          <path d="M0 6L8 3L34 7L38 9L33 41L20 44L5 40Z" fill="#d9dcdf" />
          <path d="M0 6L20 11L38 9L33 41L20 44L5 40Z" fill="#eceef0" />
          <path d="M20 11L38 9L33 41L20 44Z" fill="#c3c7cb" />
          <path d="M3 7L10 1L17 3L24 0L28 5L34 8L20 12Z" fill="#f6f7f8" />
          <path d="M8 18L12 16L16 20M6 22L7 28L11 30M14 30L18 28L17 23" stroke="#1a8ae0" strokeWidth="3.500" fill="none" />
        </svg>
      </DeskItem>
      <Maloprodaja />
      <PretragaSkladista />
      <div className="absolute bottom-0 left-0 z-20 flex h-[40px] w-[1680px] bg-[linear-gradient(90deg,#090d14_0px,#15181c_80px,#2b2c2d_150px,#2e2f30_1000px,#292929_1500px,#1b1f24_1640px,#0c121b_1680px)]">
        <TaskIcons />
        <div className={`${UI} ml-auto flex items-center text-[12.5px] leading-[15px] text-white`}>
          <svg width="100" height="18" viewBox="0 0 100 18" fill="none" stroke="#fff" strokeWidth="1.200">
            <circle cx="11" cy="4" r="3" />
            <path d="M7 13Q7 8 11 8Q15 8 15 13" />
            <circle cx="4.500" cy="8.500" r="2.600" />
            <path d="M0.500 16.500Q0.500 12 4.500 12Q8.500 12 8.500 16.500M37 12L43 6L49 12" />
            <path d="M64 4H75V13H62V9M69 13V16M64 16.500H74M60 3H64V8H60ZM84 7H86L90 3V15L86 11H84ZM92 6Q94 9 92 12" />
            <path d="M94.500 4Q98 9 94.500 14M97 2Q101 9 97 16" opacity="0.500" />
          </svg>
          <Txt v="HRV|22" className="ml-[10px]" />
          <div className="ml-[12px] flex flex-col items-center gap-[2px]">
            <Txt v="17:48|28" />
            <Txt v="22.07.2018|54" />
          </div>
          <svg width="16" height="18" viewBox="0 0 16 18" className="ml-[19px]" fill="none" stroke="#fff" strokeWidth="1.200">
            <path d="M1 1H15V13.500H10L8 16L6 13.500H1Z" />
          </svg>
          <div className="mr-[4px] ml-[20px] h-[40px] w-px bg-[#7c7f83]" />
        </div>
      </div>
    </div>
  );
}

function RightMonitor() {
  return (
    <div className="relative h-[1084px] w-[1920px] overflow-hidden bg-black">
      <div className="absolute top-[4px] left-0 h-[1040px] w-[1920px] bg-[radial-gradient(ellipse_520px_150px_at_1370px_865px,#0069c8_0%,#0058aad9_35%,#00407f80_70%,#00305f00_100%),radial-gradient(ellipse_330px_200px_at_1380px_200px,#004a90_0%,#003a7800_100%),radial-gradient(ellipse_230px_440px_at_1920px_500px,#004078_0%,#00407800_100%),linear-gradient(180deg,#00000000_80%,#000c2499_100%),linear-gradient(90deg,#00122d_0%,#001a3a_15%,#00254c_45%,#00214a_70%,#001a3c_85%,#001e42_100%)]" />
      <div className="absolute top-[760px] left-0 h-[290px] w-[101px] bg-linear-to-b from-[#00102d00] to-[#000a24]" />
      <DeskItem className="top-[10px] left-[77px]" labels={["Far Cry|40", "Primal|38"]}>
        <svg width="46" height="46" viewBox="0 0 46 46">
          <circle cx="23" cy="23" r="22" fill="#0a0a0a" stroke="#d98a36" strokeWidth="1.800" />
          <path d="M23 6Q27 13 32 24Q32 28 27 28H19Q14 28 14 24Q19 13 23 6Z" fill="#ef9a42" />
          <path d="M13 28L23 33L33 28V34L28 38H18L13 34ZM19 39H27V42H19Z" fill="#ef9a42" />
          <path d="M15 30L21 33L16 34ZM31 30L25 33L30 34Z" fill="#0a0a0a" />
        </svg>
        <div className="absolute top-0 left-[16px]">
          <Shortcut />
        </div>
      </DeskItem>
      <svg width="48" height="48" viewBox="0 0 48 48" className="absolute top-[11px] left-[166px]">
        <rect width="48" height="48" fill="#7a3b30" />
        <rect x="0" width="18" height="48" fill="#8f4c3a" />
        <path d="M8 48Q10 28 18 22Q12 14 20 4Q28 0 33 8Q34 16 30 20Q40 24 44 48Z" fill="#2b1a1c" />
        <path d="M10 8Q20 0 25 6L22 18L12 16Z" fill="#57444a" />
        <path d="M34 30L42 22L44 40L36 44Z" fill="#e77f2c" />
        <path d="M38 30L41 27L42 36Z" fill="#fbd28a" />
      </svg>
      <div className="absolute top-[10px] left-[169px]">
        <Shortcut />
      </div>
      <div className="absolute top-[16px] left-[250px]">
        <Folder />
      </div>
      <div className="absolute top-[16px] left-[326px]">
        <Folder />
      </div>
      <DeskItem className="top-[16px] left-[1367px]" labels={["PoslovniPr...|65"]}>
        <Folder />
      </DeskItem>
      <PregledArtikla />
      <GlavniIzbornik />
      <Kalkulacije />
      <div className="absolute bottom-0 left-0 z-20 flex h-[40px] w-[1920px] bg-[linear-gradient(90deg,#0a0e15_0px,#17191d_80px,#2f3030_170px,#323333_700px,#222425_1050px,#0d1219_1350px,#060a11_1920px)]">
        <TaskIcons />
        <div className={`${UI} mr-[6px] ml-auto flex flex-col items-center justify-center gap-[2px] text-[12px] leading-[15px] text-white`}>
          <Txt v="17:48|27" />
          <Txt v="22.07.2018|54" />
        </div>
      </div>
    </div>
  );
}

export default function App() {
  return (
    <div className="flex h-[1084px] w-[3600px] items-start overflow-hidden bg-black text-black">
      <LeftMonitor />
      <RightMonitor />
    </div>
  );
}
